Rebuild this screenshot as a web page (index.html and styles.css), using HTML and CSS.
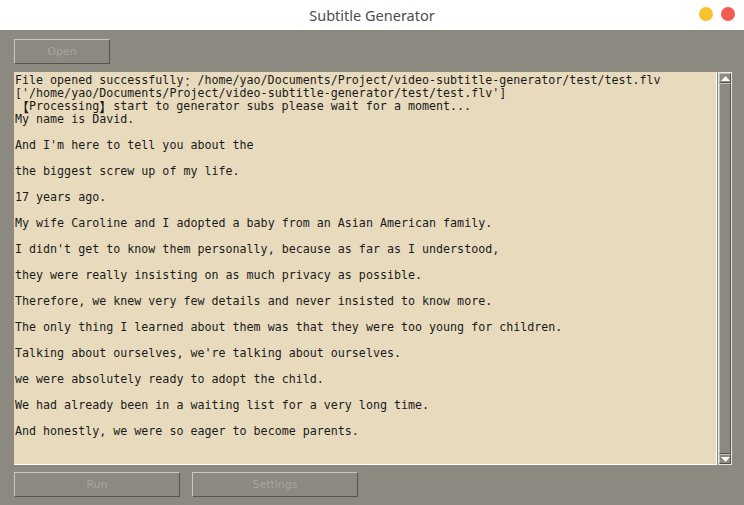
FILE: index.html
```html
<!DOCTYPE html>
<html>
<head>
<meta charset="utf-8">
<link rel="stylesheet" href="styles.css">
</head>
<body>
<div class="window">
  <header class="titlebar">
    <span class="title">Subtitle Generator</span>
    <div class="controls">
      <span class="dot dot-min"></span>
      <span class="dot dot-close"></span>
    </div>
  </header>
  <main class="content">
    <div class="toprow">
      <button class="btn btn-open">Open</button>
    </div>
    <div class="editor">
      <div class="textarea"><div class="text">File opened successfully<span class="wide colon">：</span>/home/yao/Documents/Project/video-subtitle-generator/test/test.flv
['/home/yao/Documents/Project/video-subtitle-generator/test/test.flv']
<span class="wide bracket-l">【</span>Processing<span class="wide bracket-r">】</span>start to generator subs please wait for a moment...
My name is David.

And I'm here to tell you about the

the biggest screw up of my life.

17 years ago.

My wife Caroline and I adopted a baby from an Asian American family.

I didn't get to know them personally, because as far as I understood,

they were really insisting on as much privacy as possible.

Therefore, we knew very few details and never insisted to know more.

The only thing I learned about them was that they were too young for children.

Talking about ourselves, we're talking about ourselves.

we were absolutely ready to adopt the child.

We had already been in a waiting list for a very long time.

And honestly, we were so eager to become parents.</div></div>
      <div class="scrollbar">
        <div class="sb-btn"><svg width="9" height="5" viewBox="0 0 9 5"><polygon points="4.5,0 9,5 0,5" fill="#ffffff"/></svg></div>
        <div class="sb-thumb"></div>
        <div class="sb-btn"><svg width="9" height="5" viewBox="0 0 9 5"><polygon points="0,0 9,0 4.5,5" fill="#ffffff"/></svg></div>
      </div>
    </div>
    <div class="bottomrow">
      <button class="btn btn-wide">Run</button>
      <button class="btn btn-wide">Settings</button>
    </div>
  </main>
</div>
</body>
</html>
```

FILE: styles.css
```css
html, body {
  margin: 0;
  padding: 0;
  width: 744px;
  height: 505px;
  overflow: hidden;
  background: #8c8980;
}

.window {
  display: flex;
  flex-direction: column;
  width: 744px;
  height: 505px;
}

.titlebar {
  height: 30px;
  background: #ffffff;
  display: flex;
  align-items: center;
  justify-content: center;
  position: relative;
  flex: none;
}

.title {
  font-family: "Noto Sans", "Open Sans", sans-serif;
  font-size: 14.5px;
  color: #4d4d4d;
  margin-top: -1px;
}

.controls {
  position: absolute;
  right: 9px;
  top: 7px;
  display: flex;
  gap: 8px;
}

.dot {
  width: 14px;
  height: 14px;
  border-radius: 50%;
  display: block;
}

.dot-min { background: #f7c22d; }
.dot-close { background: #f45b52; }

.content {
  flex: 1;
  display: flex;
  flex-direction: column;
  padding: 9px 12px 0 14px;
  background: #8c8980;
}

.toprow {
  display: flex;
  height: 25px;
}

.btn {
  box-sizing: border-box;
  height: 25px;
  margin: 0;
  padding: 0;
  background: #8c8980;
  border-style: solid;
  border-width: 1px;
  border-color: #cac7c0 #57544d #57544d #cac7c0;
  color: #a9a69e;
  font-family: "DejaVu Sans", sans-serif;
  font-size: 11px;
}

.btn-open {
  width: 96px;
}

.btn-wide {
  width: 166px;
}

.editor {
  display: flex;
  margin-top: 8px;
  height: 393px;
  gap: 1px;
}

.textarea {
  box-sizing: border-box;
  width: 703px;
  height: 393px;
  background: #e8dbbd;
  border-right: 1px solid #ffffff;
  border-bottom: 1px solid #ffffff;
  padding: 2px 0 0 1px;
  overflow: hidden;
}

.text {
  white-space: pre;
  font-family: "DejaVu Sans Mono", monospace;
  font-size: 11.67px;
  line-height: 13px;
  color: #1a1a1a;
}

.wide {
  display: inline-block;
  height: 13px;
  line-height: 13px;
  vertical-align: top;
  font-family: "Noto Sans CJK SC", sans-serif;
  font-size: 12px;
}

.colon {
  width: 14px;
  text-align: center;
}

.bracket-l {
  width: 14px;
  font-size: 13px;
  text-align: right;
}

.bracket-r {
  width: 14px;
  font-size: 13px;
  text-align: left;
}

.scrollbar {
  box-sizing: border-box;
  width: 14px;
  height: 393px;
  border: 1px solid #e9e7e2;
  display: flex;
  flex-direction: column;
}

.sb-btn {
  box-sizing: border-box;
  height: 10px;
  flex: none;
  display: flex;
  align-items: center;
  justify-content: center;
  background: #8c8980;
  border-style: solid;
  border-width: 1px;
  border-color: #c3c0b9 #55524b #55524b #c3c0b9;
}

.sb-thumb {
  box-sizing: border-box;
  flex: 1;
  background: #8c8980;
  border-style: solid;
  border-width: 1px;
  border-color: #c3c0b9 #55524b #55524b #c3c0b9;
}

.bottomrow {
  display: flex;
  gap: 12px;
  margin-top: 7px;
}
```
